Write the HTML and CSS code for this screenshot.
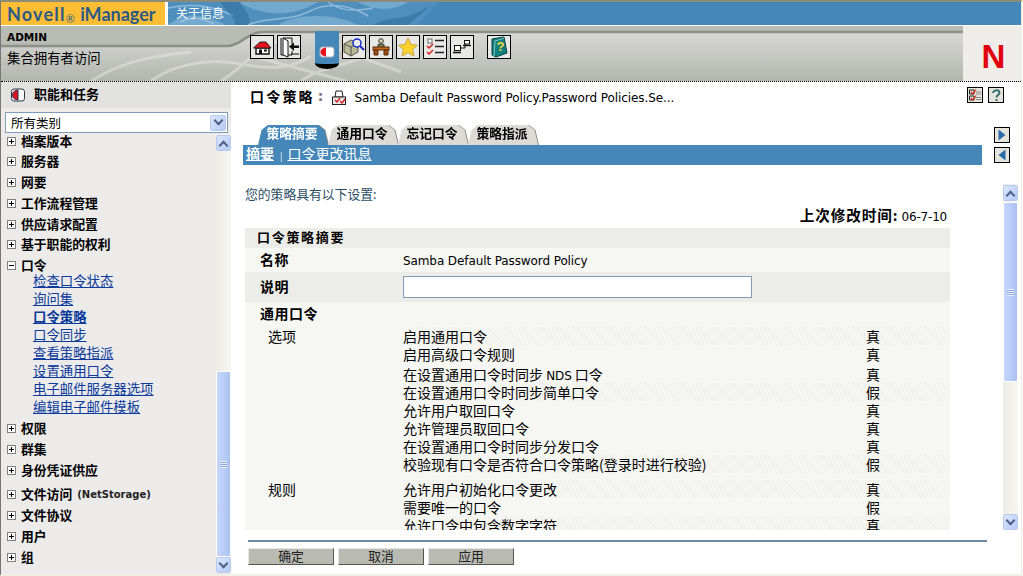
FILE: index.html
```html
<!DOCTYPE html>
<html lang="zh-CN">
<head>
<meta charset="utf-8">
<title>Novell iManager</title>
<link rel="stylesheet" href="styles.css">
</head>
<body>
<div class="page">
  <header class="banner">
    <div class="logo"><span class="logo-brand">Novell</span><span class="reg">®</span> iManager</div>
    <div class="about">
      <svg class="about-art" viewBox="0 0 270 23" preserveAspectRatio="none" aria-hidden="true">
        <path d="M0 0H270L250 23H0Z" fill="#4f8fbe"/>
        <path d="M0 23C20 8 38 14 58 23ZM70 0C90 12 120 18 150 0ZM110 23C130 10 170 12 190 23ZM190 0C205 8 225 10 240 0Z" fill="#7fb0d4" opacity=".75"/>
        <path d="M0 6C30 0 50 6 66 14M80 23C100 14 120 20 140 10S180 2 200 14M160 0C170 8 186 10 205 6M12 20C24 14 34 16 46 22" fill="none" stroke="#a9cbe3" stroke-width="1.5" opacity=".7"/>
        <path d="M52 0C60 12 70 18 66 23H80C86 14 74 6 72 0ZM205 23C220 14 235 18 250 10L262 4 240 23Z" fill="#2f6f9f" opacity=".6"/>
      </svg>
      <span class="about-text">关于信息</span>
    </div>
  </header>
  <div class="toolbar">
    <svg class="band-art" viewBox="0 0 963 55" preserveAspectRatio="none" aria-hidden="true">
      <defs>
        <linearGradient id="band" x1="0" y1="0" x2="0" y2="1">
          <stop offset="0" stop-color="#d8d9d5"/>
          <stop offset="1" stop-color="#b3b5af"/>
        </linearGradient>
      </defs>
      <rect width="963" height="55" fill="#b9bbb5"/>
      <path d="M0 20H226C240 20 246 6 262 6H963V55H0Z" fill="url(#band)"/>
      <path d="M90 55C120 36 150 30 190 26M150 55C170 40 200 34 225 36S280 50 310 30M220 55C240 44 250 24 280 14M300 55C320 40 350 40 372 26M250 30L345 55M330 20L400 46" fill="none" stroke="#e4e4e0" stroke-width="3" opacity=".55"/>
      <path d="M0 20H226C240 20 246 6 262 6H963" fill="none" stroke="#8d8f89" stroke-width="2.5"/>
    </svg>
    <div class="user">
      <div class="user-name">ADMIN</div>
      <div class="user-role">集合拥有者访问</div>
    </div>
    <nav class="tools">
      <span class="tool"><svg viewBox="0 0 22 22"><path d="M5 12H18V18H5Z" fill="#fff" stroke="#111" stroke-width="1.400"/><path d="M2.500 12L9 6H15L20 12Z" fill="#e8121d" stroke="#222"/><rect x="8" y="13.500" width="3" height="4.500" fill="#111"/><rect x="13" y="13.500" width="3" height="2" fill="#111"/></svg></span>
      <span class="tool"><svg viewBox="0 0 22 22"><path d="M3 2V19H5M5 2H14V8M14 15V19H8" fill="none" stroke="#111"/><path d="M5 2L10 5V21L5 19Z" fill="#fff" stroke="#111"/><path d="M11 10.500L16 6.500V9.500H21V12H16V15Z" fill="#111"/><path d="M13 18H21" stroke="#111"/></svg></span>
      <span class="tool-tab"><svg viewBox="0 0 16 12"><rect x="1" y="1" width="14" height="10" rx="2.500" fill="#fff" stroke="#a9b4bd"/><path d="M7 1.500C3 2 1.500 4 1.500 6S3 10 7 10.500Z" fill="#e8121d"/></svg></span>
      <span class="tool"><svg viewBox="0 0 22 22"><path d="M1 8L8 4 15 7V16L8 20 1 16Z" fill="#b9b994" stroke="#555"/><path d="M1 8L8 11 15 7M8 11V20" fill="none" stroke="#555"/><circle cx="14" cy="7" r="4" fill="#e9f0fb" stroke="#1429c4" stroke-width="1.500"/><path d="M17 10L21 14" stroke="#1429c4" stroke-width="2"/></svg></span>
      <span class="tool"><svg viewBox="0 0 22 22"><circle cx="11" cy="5" r="2.300" fill="#d9d5a8" stroke="#333"/><path d="M8 11V8.500Q11 7 14 8.500V11" fill="#7a7f55" stroke="#333"/><rect x="3" y="11" width="16" height="3" fill="#c8681c" stroke="#5a2a0a"/><path d="M4 14H8V19H4ZM14 14H18V19H14Z" fill="#a34f12" stroke="#5a2a0a"/></svg></span>
      <span class="tool"><svg viewBox="0 0 22 22"><path d="M11 2L14 8.500 20.500 9.200 15.600 13.500 17 20 11 16.600 5 20 6.400 13.500 1.500 9.200 8 8.500Z" fill="#fbd22c" stroke="#c9a33a"/></svg></span>
      <span class="tool"><svg viewBox="0 0 22 22"><rect x="4" y="3" width="4" height="4" fill="#fff" stroke="#666"/><path d="M11 4.500H20M11 10.500H20M11 16.500H20" stroke="#222" stroke-width="1.600"/><path d="M3 10L5 12 9 8M3 16L5 18 9 14" fill="none" stroke="#e0201c" stroke-width="1.500"/></svg></span>
      <span class="tool"><svg viewBox="0 0 22 22"><rect x="3.500" y="9.500" width="6" height="5" fill="#fff" stroke="#111"/><path d="M2 16.500H10" stroke="#111" stroke-width="1.600"/><path d="M9.500 12H14V8" fill="none" stroke="#111"/><rect x="13.500" y="4.500" width="5" height="3.500" fill="#fff" stroke="#111"/><path d="M12 9.500H20" stroke="#111" stroke-width="1.400"/></svg></span>
      <span class="tool tool-help"><svg viewBox="0 0 22 22"><path d="M4 3L16 1 19 17 8 21 4 19Z" fill="#12817e" stroke="#064140"/><path d="M6 20L7 5 16 2" fill="none" stroke="#7cc4c0"/><text x="12.500" y="15" class="book-q">?</text></svg></span>
    </nav>
    <div class="nbox"><span class="n-mark">N</span></div>
  </div>
  <div class="main">
    <aside class="side">
      <div class="side-head">
        <svg class="side-ic" viewBox="0 0 16 14"><rect x="1.500" y="1" width="13" height="12" rx="2.500" fill="#fff" stroke="#334"/><path d="M8 2C3.500 2.500 2.500 5 2.500 7S3.500 11.500 8 12Z" fill="#dd1620" stroke="#16315a"/></svg>
        <span class="side-title">职能和任务</span>
      </div>
      <div class="picker-wrap">
        <div class="picker">
          <span class="picker-text">所有类别</span>
          <span class="sb-btn picker-btn"><i class="chev chev-down"></i></span>
        </div>
      </div>
      <div class="side-body">
        <div class="tree">
          <div class="node node-20"><i class="box"></i>档案版本</div>
          <div class="node"><i class="box"></i>服务器</div>
          <div class="node"><i class="box"></i>网要</div>
          <div class="node"><i class="box"></i>工作流程管理</div>
          <div class="node node-20"><i class="box"></i>供应请求配置</div>
          <div class="node"><i class="box"></i>基于职能的权利</div>
          <div class="node node-open"><i class="box box-open"></i>口令</div>
          <a class="leaf" href="#">检查口令状态</a>
          <a class="leaf" href="#">询问集</a>
          <a class="leaf leaf-on" href="#">口令策略</a>
          <a class="leaf" href="#">口令同步</a>
          <a class="leaf" href="#">查看策略指派</a>
          <a class="leaf" href="#">设置通用口令</a>
          <a class="leaf" href="#">电子邮件服务器选项</a>
          <a class="leaf leaf-last" href="#">编辑电子邮件模板</a>
          <div class="node"><i class="box"></i>权限</div>
          <div class="node"><i class="box"></i>群集</div>
          <div class="node node-24"><i class="box"></i>身份凭证供应</div>
          <div class="node"><i class="box"></i>文件访问<span class="node-latin">(NetStorage)</span></div>
          <div class="node"><i class="box"></i>文件协议</div>
          <div class="node"><i class="box"></i>用户</div>
          <div class="node"><i class="box"></i>组</div>
        </div>
        <div class="sbar sbar-side">
          <span class="sb-btn"><i class="chev chev-up"></i></span>
          <span class="sb-track sb-track-side"></span>
          <span class="sb-thumb sb-thumb-side"><i class="grip"></i></span>
          <span class="sb-btn"><i class="chev chev-down"></i></span>
        </div>
      </div>
    </aside>
    <main class="content">
      <div class="title-row">
        <span class="title">口令策略</span><span class="title-colon">:</span>
        <svg class="title-ic" viewBox="0 0 16 16"><path d="M5 1H11L12 7H4Z" fill="#fff" stroke="#222"/><rect x="1.500" y="7" width="13" height="7.500" fill="#e8e8e8" stroke="#222"/><path d="M4 10L6 12 9 8M9 11L11 13 14 9" fill="none" stroke="#d81818" stroke-width="1.300"/></svg>
        <span class="title-name">Samba Default Password Policy.Password Policies.Se...</span>
        <span class="title-tools">
          <span class="mini"><svg viewBox="0 0 14 14"><path d="M1.500 2H6V6H1.500ZM1.500 8H6V12H1.500Z" fill="none" stroke="#222"/><path d="M3 4L5 6 8 1.500M3 10L5 12 8 7.500" fill="none" stroke="#d82a1c" stroke-width="1.300"/><path d="M8 4H13M8 6H13M8 9.500H13M8 11.500H13" stroke="#8a8a8a"/></svg></span>
          <span class="mini"><svg viewBox="0 0 14 14"><path d="M4 5C4 2 10 1 10.500 4.500C10.800 7 7.500 7 7.500 9.500M7.500 11V13" fill="none" stroke="#2d6b6c" stroke-width="1.800"/></svg></span>
        </span>
      </div>
      <div class="tab-row">
        <div class="tab-col">
          <div class="tabs">
            <span class="tab tab-on">策略摘要</span>
            <span class="tab">通用口令</span>
            <span class="tab">忘记口令</span>
            <span class="tab">策略指派</span>
          </div>
          <div class="subbar"><a class="sub-on" href="#">摘要</a><span class="sub-sep">|</span><a class="sub-link" href="#">口令更改讯息</a></div>
        </div>
        <div class="pager">
          <span class="mini"><svg viewBox="0 0 14 14"><path d="M3.500 1.500L10.500 7 3.500 12.500Z" fill="#2b6ca8"/></svg></span>
          <span class="mini"><svg viewBox="0 0 14 14"><path d="M10.500 1.500L3.500 7 10.500 12.500Z" fill="#2b6ca8"/></svg></span>
        </div>
      </div>
      <div class="pane-row">
        <div class="pane">
          <p class="intro">您的策略具有以下设置:</p>
          <p class="modified"><b class="mod-label">上次修改时间:</b> <span class="mod-date">06-7-10</span></p>
          <div class="sheet">
            <div class="sheet-head">口令策略摘要</div>
            <div class="kv kv-name"><b class="kv-key">名称</b><span class="latin kv-val">Samba Default Password Policy</span></div>
            <div class="kv kv-desc"><b class="kv-key">说明</b><input class="desc-input" type="text" aria-label="说明"></div>
            <div class="sect">通用口令</div>
            <div class="grp">
              <div class="opt tex"><span class="opt-key">选项</span><span>启用通用口令</span><span>真</span></div>
              <div class="opt"><span></span><span>启用高级口令规则</span><span>真</span></div>
              <div class="opt opt-tall"><span></span><span>在设置通用口令时同步 <span class="latin">NDS</span> 口令</span><span>真</span></div>
              <div class="opt tex"><span></span><span>在设置通用口令时同步简单口令</span><span>假</span></div>
              <div class="opt"><span></span><span>允许用户取回口令</span><span>真</span></div>
              <div class="opt"><span></span><span>允许管理员取回口令</span><span>真</span></div>
              <div class="opt"><span></span><span>在设置通用口令时同步分发口令</span><span>真</span></div>
              <div class="opt tex"><span></span><span>校验现有口令是否符合口令策略(登录时进行校验)</span><span>假</span></div>
            </div>
            <div class="grp grp-next">
              <div class="opt tex"><span class="opt-key">规则</span><span>允许用户初始化口令更改</span><span>真</span></div>
              <div class="opt"><span></span><span>需要唯一的口令</span><span>假</span></div>
              <div class="opt tex"><span></span><span>允许口令中包含数字字符</span><span>真</span></div>
            </div>
          </div>
        </div>
        <div class="sbar sbar-pane">
          <span class="sb-btn"><i class="chev chev-up"></i></span>
          <span class="sb-thumb sb-thumb-pane"><i class="grip"></i></span>
          <span class="sb-track"></span>
          <span class="sb-btn"><i class="chev chev-down"></i></span>
        </div>
      </div>
      <div class="actions">
        <button class="act" type="button">确定</button>
        <button class="act" type="button">取消</button>
        <button class="act" type="button">应用</button>
      </div>
    </main>
  </div>
</div>
</body>
</html>
```

FILE: styles.css
```css
* { box-sizing: border-box; }
html, body { margin: 0; padding: 0; background: #fff; }
body {
  width: 1023px;
  height: 576px;
  overflow: hidden;
  font-family: "DejaVu Sans", "Noto Sans CJK SC", sans-serif;
  font-size: 14px;
  color: #000;
}
.page {
  width: 1022px;
  height: 576px;
  display: flex;
  flex-direction: column;
  border-top: 2px solid #8c8a78;
  border-left: 1px solid #77776f;
  border-right: 1px solid #ecece0;
  border-bottom: 2px solid #f0f0e2;
}

/* banner */
.banner { height: 23px; flex: none; display: flex; }
.logo {
  width: 164px;
  background: #fdbd35;
  color: #2b5a88;
  font: 700 18px/24px Lato, sans-serif;
  padding-left: 6px;
  white-space: nowrap;
}
.logo-brand { letter-spacing: 1.200px; }
.reg { font-size: 11px; font-weight: normal; vertical-align: -2px; margin: 0 1px 0 0; }
.about {
  flex: 1;
  margin-left: 3px;
  background: #4587b8;
  position: relative;
  overflow: hidden;
}
.about-art { position: absolute; left: 0; top: 0; width: 270px; height: 23px; }
.about-text {
  position: relative;
  display: block;
  padding-left: 8px;
  color: #fff;
  font: 12px/21px "Noto Sans CJK SC", sans-serif;
}

/* toolbar */
.toolbar {
  height: 57px;
  flex: none;
  display: flex;
  position: relative;
  border-top: 1px solid #fff;
  background: #ecece8;
  border-bottom: 1px dotted #000;
}
.band-art { position: absolute; left: 0; top: 0; width: 963px; height: 55px; }
.user { position: relative; width: 249px; flex: none; padding-left: 6px; }
.user-name { font: bold 10.5px/14px "DejaVu Sans", sans-serif; padding-top: 4px; height: 18px; }
.user-role { font: 13.400px/20px "Noto Sans CJK SC", sans-serif; margin-top: 3px; }
.tools { position: relative; display: flex; gap: 3px; padding-top: 9px; flex: 1; }
.tool {
  width: 24px;
  height: 24px;
  border: 1px solid #000;
  background: #e8e8e6;
  display: block;
}
.tool svg { display: block; width: 22px; height: 22px; }
.tool-help { margin-left: 10px; }
.tool-tab {
  width: 24px;
  height: 38px;
  margin: -4px 0 0 11px;
  background: #4587b8;
  border-bottom: 5px solid #000;
  border-radius: 0 0 12px 12px / 0 0 6px 6px;
  display: flex;
  justify-content: center;
  padding-top: 15px;
}
.tool-tab svg { width: 16px; height: 12px; }
.book-q { font: bold 13px "Liberation Sans", sans-serif; fill: #f4d63a; text-anchor: middle; }
.nbox {
  position: relative;
  width: 58px;
  flex: none;
  background: #eeede9;
  text-align: center;
}
.n-mark {
  color: #e2000f;
  font: bold 33px/52px "Liberation Sans", sans-serif;
  display: block;
  padding: 5px 0 0 3px;
}

/* layout */
.main { flex: 1; min-height: 0; display: flex; }
.side { width: 230px; flex: none; display: flex; flex-direction: column; background: #ecebe9; }
.side-head {
  height: 26px;
  flex: none;
  background: #e2e2e0;
  display: flex;
  align-items: center;
  padding-left: 9px;
  gap: 8px;
}
.side-ic { width: 16px; height: 14px; }
.side-title { font-weight: bold; font-size: 13px; line-height: 22px; height: 24px; font-family: "Noto Sans CJK SC", sans-serif; }
.picker-wrap { height: 26px; flex: none; padding: 4px 3px 0 4px; }
.picker {
  height: 21px;
  background: #fff;
  border: 1px solid #7f9db9;
  display: flex;
  justify-content: space-between;
  align-items: center;
  padding: 0 1px 0 5px;
}
.picker-text { font: 12.500px/18px "Noto Sans CJK SC", sans-serif; }
.picker-btn { width: 16px; height: 17px; }
.side-body { flex: 1; min-height: 0; display: flex; }
.tree {
  width: 215px;
  flex: none;
  overflow: hidden;
  padding: 0 0 0 6px;
  margin-top: -3px;
  height: 442px;
}
.node {
  height: 21px;
  display: flex;
  align-items: flex-start;
  font: bold 12.800px/20px "Noto Sans CJK SC", sans-serif;
  white-space: pre;
}
.node-20 { height: 20px; }
.node-24 { height: 24px; }
.node-open { height: 12px; margin-top: 4px; line-height: 12px; }
.node-open .box { margin-top: 2px; }
.node-latin { font: bold 10px/21px "DejaVu Sans", sans-serif; color: #222; margin-left: 5px; }
.box {
  width: 9px;
  height: 9px;
  border: 1px solid #808080;
  background: #fff;
  flex: none;
  margin: 6px 5px 0 0;
  position: relative;
}
.box::before { content: ""; position: absolute; left: 1px; top: 3px; width: 5px; height: 1px; background: #000; }
.box::after { content: ""; position: absolute; left: 3px; top: 1px; width: 1px; height: 5px; background: #000; }
.box-open::after { display: none; }
.leaf {
  display: block;
  width: max-content;
  height: 18px;
  margin-left: 26px;
  font: 13.400px/18px "Noto Sans CJK SC", sans-serif;
  color: #0a3a9c;
}
.leaf-on { font-weight: bold; }
.leaf-last { margin-bottom: 3px; }

/* scrollbars */
.sbar { width: 15px; flex: none; display: flex; flex-direction: column; background: #f3f2ee; }
.sb-btn {
  display: flex;
  align-items: center;
  justify-content: center;
  height: 16px;
  flex: none;
  background: linear-gradient(135deg, #dbe6fd, #b4caf7);
  border: 1px solid #fff;
  outline: 1px solid #b8c9ea;
  outline-offset: -1px;
  border-radius: 2px;
}
.chev { width: 7px; height: 7px; display: block; border: solid #4d6185; border-width: 2px 0 0 2px; }
.chev-up { transform: rotate(45deg); margin-top: 4px; }
.chev-down { transform: rotate(225deg); margin-bottom: 4px; }
.sb-track { flex: 1; }
.sb-track-side { background: linear-gradient(90deg, #edece7, #f6f5f1); }
.sb-thumb {
  display: flex;
  align-items: center;
  justify-content: center;
  flex: none;
  background: linear-gradient(90deg, #c6d6fb, #b6cbf7 60%, #a9c0ee);
  border: 1px solid #fff;
  border-radius: 2px;
}
.sb-thumb-side { height: 186px; }
.sb-thumb-pane { height: 180px; margin-top: 1px; }
.grip {
  width: 7px;
  height: 7px;
  background: repeating-linear-gradient(#eaf0fe 0 1px, #8ea8dc 1px 2px);
}
.sbar-side { height: 439px; padding-top: 1px; }

/* content */
.content { flex: 1; min-width: 0; display: flex; flex-direction: column; }
.title-row {
  height: 28px;
  flex: none;
  display: flex;
  align-items: center;
  padding-left: 19px;
}
.title {
  font: bold 14px/24px "Noto Sans CJK SC", sans-serif;
  letter-spacing: 2.200px;
}
.title-colon { color: #777; font-weight: bold; margin-left: 3px; }
.title-ic { width: 16px; height: 16px; margin-left: 8px; margin-top: 3px; }
.title-name { margin-left: 7px; font: 12px/16px "DejaVu Sans", sans-serif; letter-spacing: -.08px; white-space: nowrap; margin-top: 4px; }
.title-tools { margin-left: auto; margin-right: 17px; display: flex; gap: 5px; margin-top: -2px; }
.mini {
  width: 16px;
  height: 16px;
  display: block;
  border: 1px solid #000;
  background: #e4e3dc;
}
.mini svg { display: block; width: 14px; height: 14px; }
.tab-row { height: 55px; flex: none; display: flex; }
.tab-col { width: 739px; margin-left: 12px; padding-top: 15px; flex: none; }
.tabs { height: 20px; display: flex; padding-left: 15px; filter: drop-shadow(1px 0 0 #8d8d88); }
.tab {
  width: 70px;
  height: 20px;
  padding-right: 2px;
  background: #dddbd5;
  clip-path: polygon(0 100%, 5% 25%, 14% 0, 86% 0, 95% 25%, 100% 100%);
  text-align: center;
  font: bold 12.800px/16px "Noto Sans CJK SC", sans-serif;
}
.tab-on { background: #4587b8; color: #fff; }
.subbar {
  height: 20px;
  background: #4587b8;
  padding-left: 3px;
  color: #fff;
  display: flex;
  font: 14px/17px "Noto Sans CJK SC", sans-serif;
}
.sub-on { color: #fff; font-weight: bold; }
.sub-link { color: #fff; }
.sub-sep { font-size: 9px; padding: 2px 5px 0 6px; line-height: 20px; }
.pager { margin-left: 12px; padding-top: 17px; display: flex; flex-direction: column; gap: 4px; }

.pane-row { height: 365px; flex: none; display: flex; padding-top: 19px; }
.pane { width: 705px; margin-left: 14px; height: 346px; overflow: hidden; flex: none; }
.sbar-pane { margin-left: 53px; height: 346px; padding-top: 1px; background: linear-gradient(90deg,#ecebe6,#f8f7f3); }
.intro { margin: 1px 0 0; padding-left: 0; font: 12.800px/18px "Noto Sans CJK SC", sans-serif; color: #2c4e66; }
.modified {
  margin: 3px 0 0;
  height: 22px;
  text-align: right;
  padding-right: 3px;
  font: 14px/18px "Noto Sans CJK SC", sans-serif;
}
.mod-label { font-size: 14.600px; letter-spacing: .9px; }
.mod-date { font: 12px/18px "DejaVu Sans", sans-serif; letter-spacing: -.2px; }
.sheet { background: #f6f6f2; height: 302px; overflow: hidden; }
.sheet-head {
  height: 20px;
  background: #ecece8;
  padding-left: 12px;
  font: bold 13px/18px "Noto Sans CJK SC", sans-serif;
  letter-spacing: 1.700px;
}
.kv { display: grid; grid-template-columns: 158px 1fr; align-items: center; }
.kv-name { height: 24px; }
.kv-desc { height: 30px; background: #ecece8; }
.kv-key { padding: 0 0 2px 15px; font: bold 14px/20px "Noto Sans CJK SC", sans-serif; letter-spacing: .5px; }
.kv-val { padding-top: 1px; }
.latin { font: 12px/18px "DejaVu Sans", sans-serif; letter-spacing: -.1px; }
.desc-input {
  width: 349px;
  height: 22px;
  padding: 0;
  border: 1px solid #7f9db9;
  background: #fff;
  display: block;
}
.sect {
  height: 24px;
  padding: 2px 0 0 15px;
  font: bold 14px/18px "Noto Sans CJK SC", sans-serif;
  letter-spacing: .5px;
}
.opt {
  display: grid;
  grid-template-columns: 158px 463px 1fr;
  height: 18px;
  font: 14px/18px "Noto Sans CJK SC", sans-serif;
  white-space: nowrap;
}
.opt-tall { height: 20px; line-height: 22px; }
.opt-key { padding-left: 23px; }
.tex {
  background: repeating-linear-gradient(45deg, #efefeb 0 1px, transparent 1px 3px) right top / calc(100% - 158px) 100% no-repeat;
}
.grp { padding-top: 1px; }
.grp-next { padding-top: 7px; }

.actions { flex: none; margin-left: 17px; width: 739px; margin-top: 10px; border-top: 2px solid #6d8a9f; padding-top: 6px; display: flex; gap: 4px; }
.act {
  width: 86px;
  height: 17px;
  padding: 0 0 2px;
  background: #b9bbb3;
  border: 1px solid;
  border-color: #e6e6e2 #55574f #55574f #e6e6e2;
  color: #222;
  font: 12.800px/12px "Noto Sans CJK SC", sans-serif;
}
```
